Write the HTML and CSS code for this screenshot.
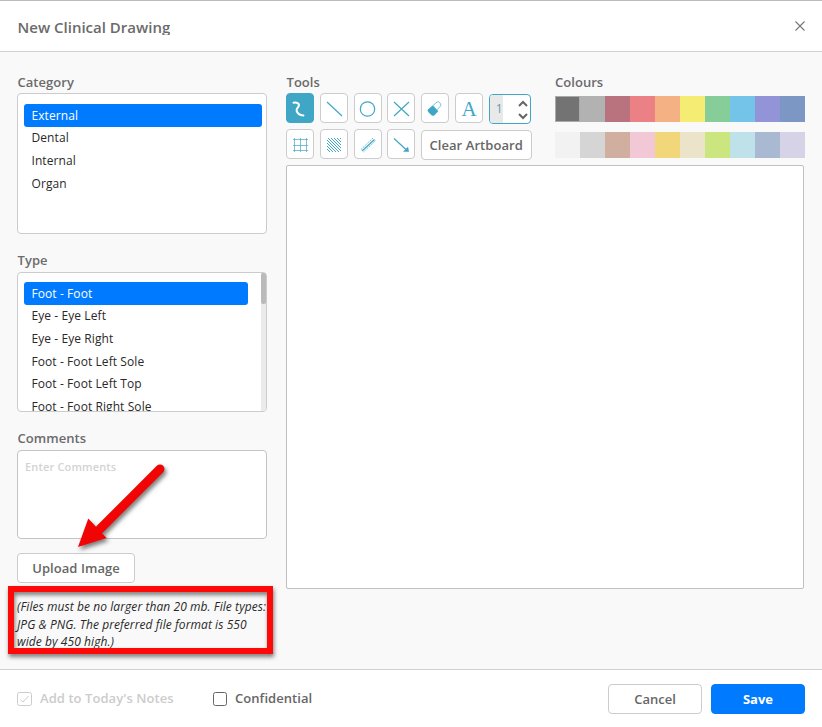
FILE: index.html
```html
<!DOCTYPE html>
<html lang="en">
<head>
<meta charset="utf-8">
<title>New Clinical Drawing</title>
<link rel="stylesheet" href="styles.css">
</head>
<body>
<div class="dialog">
  <header class="head">
    <h1>New Clinical Drawing</h1>
    <svg class="close" width="12" height="12" viewBox="0 0 12 12"><path d="M1.500 1.500l9 9M10.500 1.500l-9 9"/></svg>
  </header>
  <main class="body">
    <section class="side">
      <div class="label">Category</div>
      <ul class="list category">
        <li class="selected">External</li><li>Dental</li><li>Internal</li><li>Organ</li>
      </ul>
      <div class="label">Type</div>
      <div class="scroller">
        <ul class="list type">
          <li class="selected">Foot - Foot</li><li>Eye - Eye Left</li><li>Eye - Eye Right</li><li>Foot - Foot Left Sole</li><li>Foot - Foot Left Top</li><li>Foot - Foot Right Sole</li>
        </ul>
        <div class="track"><div class="thumb"></div></div>
      </div>
      <div class="label">Comments</div>
      <div class="comments">Enter Comments</div>
      <div class="btn upload">Upload Image</div>
      <p class="note">(Files must be no larger than 20 mb. File types:<br>JPG &amp; PNG. The preferred file format is 550<br>wide by 450 high.)</p>
      <div class="frame"></div>
      <svg class="pointer" width="110" height="110" viewBox="0 0 110 110"><path d="M90 14L30 74" class="shaft"/><path d="M8 92L18.300 63.500L36.500 83z" class="tip"/></svg>
    </section>
    <section class="work">
      <div class="bar">
        <div class="tools">
          <div class="label">Tools</div>
          <div class="row">
            <div class="tool on"><svg viewBox="0 0 28 30"><path class="pen" d="M7.500 9.700c3-.6 6 .6 5.300 3-.6 2.200-3 3-2.200 5.200.8 2.600 3.500 4.400 6.800 4.500"/></svg></div>
            <div class="tool"><svg viewBox="0 0 28 30"><path d="M7 9l15 14"/></svg></div>
            <div class="tool"><svg viewBox="0 0 28 30"><circle cx="13.500" cy="16" r="7.200"/></svg></div>
            <div class="tool"><svg viewBox="0 0 28 30"><path d="M7 9l15 14M22 9L7 23"/></svg></div>
            <div class="tool"><svg viewBox="0 0 28 30"><path class="fine" d="M12 12.500l4-3.500q1.500-.7 2.600.6l1 1.300q.7 1.600-.5 2.700l-3.500 3.500z"/><path class="fill" d="M11.500 12.500l5.800 5.700-3.800 4q-1.500 1-3 0l-3.300-3.200q-1.200-1.500 0-2.800z"/></svg></div>
            <div class="tool letter">A</div>
            <div class="spinner"><span>1</span><svg viewBox="0 0 14 28"><path d="M3 11l4-4 4 4M3 19l4 4 4-4"/></svg></div>
          </div>
          <div class="row second">
            <div class="tool"><svg viewBox="0 0 28 30"><path class="fine" d="M8.500 9v14M14.500 9v14M20.500 9v14M7 10.500h15M7 16.500h15M7 21.500h15"/></svg></div>
            <div class="tool"><svg viewBox="0 0 28 30"><path class="hatch" d="M7 20l3 3M7 17l6 6M7 14l9 9M7 11l12 12M8 9l13 13M11 9l10 10M14 9l7 7M17 9l4 4M20 9l1 1"/></svg></div>
            <div class="tool"><svg viewBox="0 0 28 30"><path class="dots" d="M7 20.500L19 9M9.500 23L21.500 11.500"/><path d="M8 22L20.500 10.500"/></svg></div>
            <div class="tool"><svg viewBox="0 0 28 30"><path d="M7 9.500l12 11"/><path class="fill" d="M22 22.800h-6l5-5z"/></svg></div>
            <div class="btn clear">Clear Artboard</div>
          </div>
        </div>
        <div class="colours">
          <div class="label">Colours</div>
          <div class="swatches"><i class="c1"></i><i class="c2"></i><i class="c3"></i><i class="c4"></i><i class="c5"></i><i class="c6"></i><i class="c7"></i><i class="c8"></i><i class="c9"></i><i class="c10"></i></div>
          <div class="swatches"><i class="c11"></i><i class="c12"></i><i class="c13"></i><i class="c14"></i><i class="c15"></i><i class="c16"></i><i class="c17"></i><i class="c18"></i><i class="c19"></i><i class="c20"></i></div>
        </div>
      </div>
      <div class="artboard"></div>
    </section>
  </main>
  <footer class="foot">
    <div class="check disabled"><svg width="15" height="14" viewBox="0 0 15 14"><rect x=".5" y=".5" width="14" height="13" rx="2"/><path d="M3.500 7.500l2.500 2.500 5.500-6"/></svg><span>Add to Today's Notes</span></div>
    <div class="check"><svg width="14" height="14" viewBox="0 0 14 14"><rect x=".5" y=".5" width="13" height="13" rx="2"/></svg><span>Confidential</span></div>
    <div class="actions"><div class="btn cancel">Cancel</div><div class="btn save">Save</div></div>
  </footer>
</div>
</body>
</html>
```
FILE: styles.css
```css
* { box-sizing: border-box; }
body { margin: 0; font-family: "Open Sans", sans-serif; font-size: 13px; color: #666; background: #fff; }
.dialog { width: 822px; height: 727px; display: flex; flex-direction: column; overflow: hidden; border-top: 1px solid #bbb; }
.head { height: 51px; flex: none; display: flex; align-items: center; justify-content: space-between; padding: 0 16px 0 17px; border-bottom: 1px solid #d0d0d0; }
h1 { margin: 0; padding-left: .5px; font-size: 15px; line-height: 18px; height: 17px; overflow: hidden; font-weight: 600; color: #6b6b6b; }
.close { fill: none; stroke: #777; stroke-width: 1.1; }
.body { height: 617px; flex: none; display: flex; gap: 19px; padding: 20px 17px 0; background: #f9f9f9; }
.label { height: 21px; line-height: 21px; font-weight: 600; color: #6b6b6b; padding-left: .5px; letter-spacing: .04px; }
.colours .label { padding-left: 0; }
.side { width: 250px; position: relative; }
.list { margin: 0; padding: 10px 4px 0 6px; list-style: none; border: 1px solid #ccc; border-radius: 4px; background: #fff; color: #292929; font-size: 12px; line-height: 23.5px; letter-spacing: .08px; overflow: hidden; }
.list li { padding-left: 7.5px; height: 22.75px; border-radius: 3px; }
.list .selected { background: #007bff; color: #fff; }
.list .selected + li { margin-top: -.52px; }
.category { height: 141px; margin-bottom: 16px; }
.scroller { position: relative; margin-bottom: 16px; padding-top: 1px; }
.type { height: 140px; padding: 9px 18px 0 6px; }
.track { position: absolute; right: 1px; top: 2px; width: 5px; height: 138px; background: #ebebeb; border-radius: 0 3px 3px 0; }
.thumb { height: 31px; background: #bababa; border-radius: 2px; }
.scroller + .label { height: 22px; }
.comments { height: 89px; padding: 8px 7px; border: 1px solid #c4c4c4; border-radius: 4px; background: #fff; color: #d3d3d3; font-size: 11px; line-height: 16px; font-weight: 600; letter-spacing: .16px; }
.btn { height: 30px; border: 1px solid #ccc; border-radius: 4px; background: #fff; font-weight: 600; line-height: 29px; text-align: center; color: #666; }
.upload { width: 118px; margin-top: 14px; letter-spacing: .06px; }
.note { margin: 15px 0 0; font-size: 12px; font-style: italic; line-height: 17.6px; letter-spacing: .075px; color: #292929; white-space: nowrap; }
.frame { position: absolute; left: -9px; top: 514px; width: 265px; height: 68px; border: 6px solid #fe0808; filter: drop-shadow(1px 3px 2px rgba(0,0,0,.5)); }
.pointer { position: absolute; left: 53px; top: 383px; filter: drop-shadow(2px 3px 2px rgba(0,0,0,.5)); }
.shaft { stroke: #f10404; stroke-width: 9; stroke-linecap: round; }
.tip { fill: #f10404; }
.work { width: 518px; }
.bar { height: 93px; display: flex; justify-content: space-between; }
.tools { width: 250px; }
.row { display: flex; gap: 5.8px; height: 36px; }
.tool { width: 28px; height: 30px; border: 1px solid #ccc; border-radius: 4px; background: #fff; flex: none; }
.tool svg { display: block; width: 28px; height: 30px; margin: -1px; fill: none; stroke: #3fa7c5; stroke-width: 1.2; }
.tool.on { background: #3fa7c5; border-color: #3fa7c5; }
.tool .pen { stroke: #fff; stroke-width: 2; stroke-linecap: round; }
.tool .fine { stroke-width: .7; }
.tool .hatch { stroke-width: 1; }
.tool .fill { fill: #3fa7c5; stroke: none; }
.tool .dots { stroke-width: .8; stroke-dasharray: 1.5 1; }
.letter { font: 21px/31px "Liberation Serif", serif; text-align: center; color: #3fa7c5; }
.spinner { width: 42px; height: 30px; margin-top: 1px; border: 1px solid #3fa7c5; border-radius: 4px; background: #fff; display: flex; justify-content: space-between; overflow: hidden; }
.spinner span { width: 13px; background: #e9e9e9; color: #5a9fb5; font-size: 12px; line-height: 28px; padding-left: 6px; }
.spinner svg { width: 14px; height: 28px; fill: none; stroke: #666; stroke-width: 2; }
.clear { width: 111px; margin-top: 1px; padding-right: 1px; letter-spacing: .07px; }
.colours { width: 249px; }
.swatches { display: flex; width: 250px; height: 26px; margin: 3px 0 10px; }
.swatches i { width: 25px; height: 26px; }
.c1 { background: #737373; border: 1px solid #aaa; } .c2 { background: #b2b2b2; } .c3 { background: #b8737f; } .c4 { background: #eb8185; } .c5 { background: #f4b183; }
.c6 { background: #f5ec74; } .c7 { background: #86cd9a; } .c8 { background: #74c3e8; } .c9 { background: #9394d8; } .c10 { background: #7d97c4; }
.c11 { background: #f2f2f2; } .c12 { background: #d5d5d5; } .c13 { background: #d0afa0; } .c14 { background: #f3c8d6; } .c15 { background: #f2d77a; }
.c16 { background: #ebe4cb; } .c17 { background: #cce67f; } .c18 { background: #bfe1e9; } .c19 { background: #a9b9d2; } .c20 { background: #d7d3e7; }
.artboard { height: 424px; background: #fff; border: 1px solid #c0c0c0; border-radius: 2px; }
.foot { flex: 1; display: flex; align-items: center; padding: 0 17px; border-top: 1px solid #d0d0d0; }
.check { display: flex; align-items: center; gap: 8px; width: 196px; font-weight: 600; letter-spacing: .06px; }
.check span { padding-bottom: 2px; }
.check svg { fill: none; stroke: #666; flex: none; }
.check.disabled { color: #ccc; }
.check.disabled svg { stroke: #ccc; }
.actions { margin-left: auto; display: flex; gap: 9px; }
.actions .btn { width: 94px; }
.actions .save { background: #007bff; border-color: #007bff; color: #fff; font-weight: 700; }
```
